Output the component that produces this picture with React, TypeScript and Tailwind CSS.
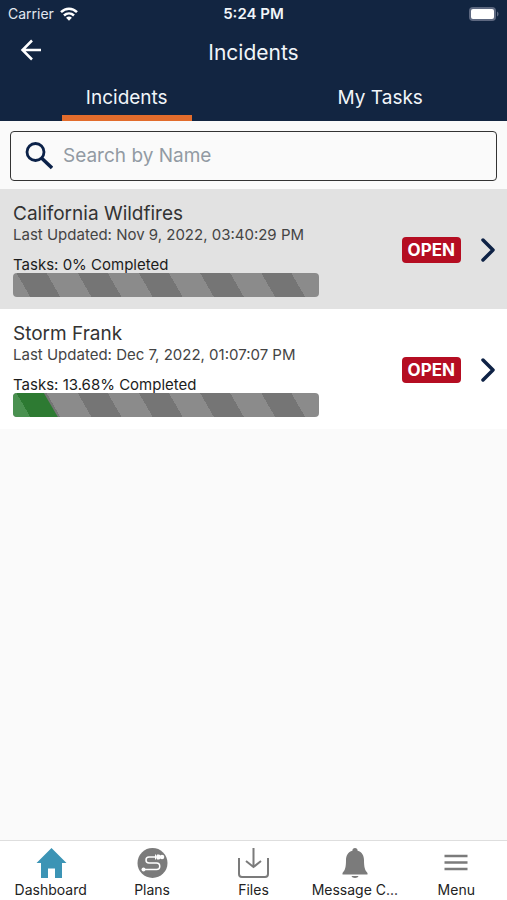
import { useState, type ReactNode } from 'react'

interface Incident {
  id: string
  name: string
  updated: string
  progress: number
  status: string
}

const incidents: Incident[] = [
  {
    id: 'california',
    name: 'California Wildfires',
    updated: 'Nov 9, 2022, 03:40:29 PM',
    progress: 0,
    status: 'OPEN',
  },
  {
    id: 'frank',
    name: 'Storm Frank',
    updated: 'Dec 7, 2022, 01:07:07 PM',
    progress: 13.68,
    status: 'OPEN',
  },
]

const tabs = ['Incidents', 'My Tasks']

function StatusBar() {
  return (
    <div className="grid h-7 grid-cols-3 items-center px-2">
      <div className="flex items-center gap-[6px] text-sm text-slate-200">
        Carrier
        <svg className="h-[14px] w-[18px]" viewBox="0 0 18 14" fill="none" stroke="#fff" strokeWidth="2.5">
          <path d="M1 5.2C5.6.6 12.4.6 17 5.2" />
          <path d="M4 8.500c2.900-2.800 7.100-2.800 10 0" />
          <path d="M9 13.700l-2.900-3c1.700-1.500 4.100-1.500 5.800 0z" fill="#fff" stroke="none" />
        </svg>
      </div>
      <div className="text-center text-[15px] font-semibold">5:24 PM</div>
      <svg className="h-[14px] w-[30px] justify-self-end" viewBox="0 0 30 14">
        <rect x="0" y="0" width="27" height="14" rx="4" fill="#5d6880" />
        <rect x="2" y="2" width="23" height="10" rx="2" fill="#fff" />
        <path d="M28 4.500c2 .8 2 4.200 0 5z" fill="#5d6880" />
      </svg>
    </div>
  )
}

function ProgressBar({ value, label }: { value: number; label: string }) {
  return (
    <div
      role="progressbar"
      aria-label={label}
      aria-valuenow={value}
      aria-valuemin={0}
      aria-valuemax={100}
      className="h-6 overflow-hidden rounded bg-[repeating-linear-gradient(60deg,#8b8b8b_0px,#8b8b8b_15px,#757575_15px,#757575_41px,#8b8b8b_41px,#8b8b8b_53px)]"
    >
      {value > 0 && (
        <div
          className="h-full bg-[repeating-linear-gradient(60deg,#4a9150_0px,#4a9150_15px,#2d7a32_15px,#2d7a32_41px,#4a9150_41px,#4a9150_53px)] [clip-path:polygon(0_0,calc(100%-14px)_0,100%_100%,0_100%)]"
          style={{ width: `calc(${value}% + 3px)` }}
        />
      )}
    </div>
  )
}

function IncidentRow({ incident, active }: { incident: Incident; active: boolean }) {
  return (
    <li className={active ? 'bg-[#e2e2e2]' : 'bg-white'}>
      <a href={`#${incident.id}`} className="flex h-[120px] items-center pt-px pr-3 pl-[13px]">
        <div className="min-w-0 flex-1">
          <h2 className="text-[19px] leading-6 text-[#333]">{incident.name}</h2>
          <p className="text-[15px] leading-[18px] text-[#444]">Last Updated: {incident.updated}</p>
          <p className="mt-3 text-[15px] leading-[17px] text-[#1c1c1c]">Tasks: {incident.progress}% Completed</p>
          <div className="w-[79%] max-w-[306px]">
            <ProgressBar value={incident.progress} label={`${incident.name} tasks`} />
          </div>
        </div>
        <span className="rounded bg-[#b50d22] px-[6px] text-[17px] leading-[26px] font-bold text-white">
          {incident.status}
        </span>
        <svg className="ml-5 h-6 w-[14px]" viewBox="0 0 14 24" fill="none" stroke="#0e2245" strokeWidth="3.500" strokeLinecap="round" strokeLinejoin="round">
          <path d="M2 2l10 10L2 22" />
        </svg>
      </a>
    </li>
  )
}

function NavItem({ label, children }: { label: string; children: ReactNode }) {
  return (
    <a href="#nav" className="flex min-w-0 flex-col items-center pt-[6px]">
      <svg className="h-8 w-8" viewBox="0 0 32 32" fill="none">
        {children}
      </svg>
      <span className="text-sm leading-[22px] whitespace-nowrap text-[#222]">{label}</span>
    </a>
  )
}

export default function App() {
  const [tab, setTab] = useState('Incidents')
  const [query, setQuery] = useState('')

  const visible = incidents.filter((i) => i.name.toLowerCase().includes(query.toLowerCase()))

  return (
    <div className="flex min-h-screen flex-col bg-[#fafafa] font-['Inter',sans-serif]">
      <header className="bg-[#122541] text-slate-100">
        <StatusBar />
        <div className="grid h-12 grid-cols-[1fr_auto_1fr] items-center px-5">
          <button aria-label="Back" className="justify-self-start pb-1 text-white">
            <svg className="h-[22px] w-[22px]" viewBox="0 0 22 22" fill="none" stroke="currentColor" strokeWidth="2.500">
              <path d="M21 11H2.500M12 1.500L2.500 11l9.500 9.500" />
            </svg>
          </button>
          <h1 className="pt-px text-[21px]">Incidents</h1>
        </div>
        <div className="grid h-[45px] grid-cols-2">
          {tabs.map((name) => (
            <button
              key={name}
              onClick={() => setTab(name)}
              className="flex flex-col items-center justify-between pt-2 text-[19px] leading-7"
            >
              {name}
              <span className={tab === name ? 'h-[6px] w-[130px] bg-[#e26c2c]' : 'h-[6px] w-[130px]'} />
            </button>
          ))}
        </div>
      </header>

      <main className="flex-1">
        <div className="px-[10px] pt-[10px] pb-2">
          <label className="flex h-[50px] items-center gap-[10px] rounded border border-[#333] pl-[14px]">
            <svg className="h-7 w-7" viewBox="0 0 28 28" fill="none" stroke="#0b2148">
              <circle cx="10.500" cy="10" r="8.500" strokeWidth="2.800" />
              <path d="M16.500 16l10.500 10" strokeWidth="3.500" />
            </svg>
            <input
              type="text"
              aria-label="Search by Name"
              placeholder="Search by Name"
              value={query}
              onChange={(e) => setQuery(e.target.value)}
              className="min-w-0 flex-1 text-[19px] outline-none placeholder:text-[#929aa3]"
            />
          </label>
        </div>
        <ul>
          {visible.map((incident, i) => (
            <IncidentRow key={incident.id} incident={incident} active={i === 0} />
          ))}
        </ul>
      </main>

      <nav className="grid h-[60px] grid-cols-5 border-t border-[#dedede] bg-white">
        <NavItem label="Dashboard">
          <path d="M16.500 1L1.500 16H6v15h7V21.500h7V31h7V16h4.500z" fill="#3c94b5" />
        </NavItem>
        <NavItem label="Plans">
          <circle cx="16.500" cy="16" r="15" fill="#7b7b7b" />
          <path
            d="M24 10H13a3 3 0 0 0 0 6h7.500a3 3 0 0 1 0 6.500H8"
            stroke="#fff"
            strokeWidth="1.500"
          />
          <circle cx="7.500" cy="22.500" r="2" fill="#fff" />
          <circle cx="26" cy="10" r="2.300" fill="#fff" />
          <path d="M19.500 7.500v5M21 8h2.500v4H21z" fill="#fff" stroke="#fff" />
        </NavItem>
        <NavItem label="Files">
          <g stroke="#7b7b7b" strokeWidth="2">
            <path d="M2 11v16a3 3 0 0 0 3 3h23a3 3 0 0 0 3-3V11" />
            <path d="M16.500 1v19M9 14l7.500 6 7.500-6" />
          </g>
        </NavItem>
        <NavItem label="Message C...">
          <path
            d="M16 1c1.600 0 2.600 1 2.600 2.700C23 5 25 8.500 25 13c0 7 .8 10 3.500 13v1.500h-25V26C6.200 23 7 20 7 13c0-4.500 2-8 6.400-9.300C13.400 2 14.400 1 16 1z"
            fill="#7b7b7b"
          />
          <path d="M12.500 29h7c-.5 2.500-6.500 2.500-7 0z" fill="#7b7b7b" />
        </NavItem>
        <NavItem label="Menu">
          <path d="M4.500 9h23M4.500 15.500h23M4.500 22h23" stroke="#7b7b7b" strokeWidth="2.500" />
        </NavItem>
      </nav>
    </div>
  )
}
